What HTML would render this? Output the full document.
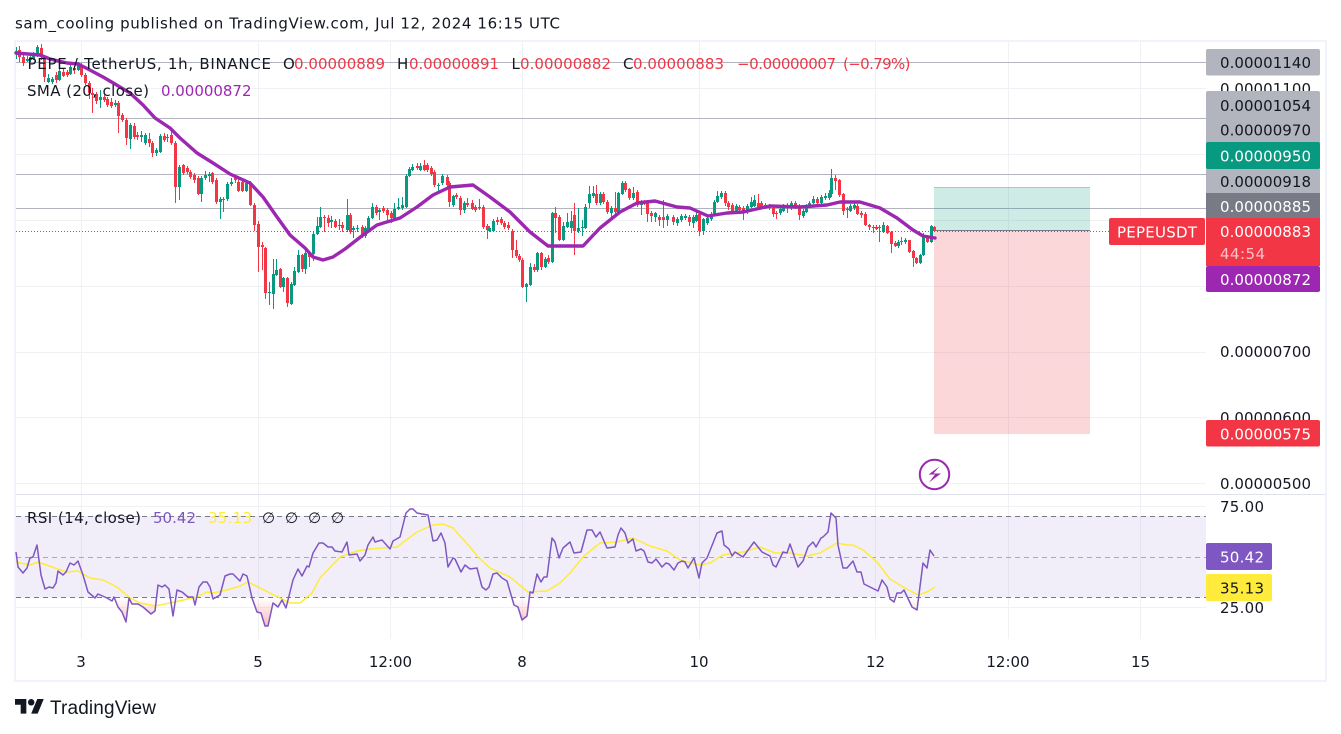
<!DOCTYPE html>
<html><head><meta charset="utf-8"><title>PEPEUSDT</title>
<style>
html,body{margin:0;padding:0;background:#fff;width:1341px;height:734px;overflow:hidden}
svg{display:block}
text{font-family:"DejaVu Sans","Liberation Sans",sans-serif;font-size:15px;fill:#131722}
.r{fill:#f23645}.w{fill:#fff}
</style></head><body>
<svg width="1341" height="734" viewBox="0 0 1341 734" xmlns="http://www.w3.org/2000/svg">
<defs><linearGradient id="g" gradientUnits="userSpaceOnUse" x1="0" y1="598" x2="0" y2="626"><stop offset="0" stop-color="#f23645" stop-opacity="0"/><stop offset="1" stop-color="#f23645" stop-opacity=".35"/></linearGradient></defs>
<rect width="1341" height="734" fill="#fff"/>
<text x="15" y="28.5" textLength="545">sam_cooling published on TradingView.com, Jul 12, 2024 16:15 UTC</text>
<rect x="15" y="41" width="1311" height="640" fill="#fff" stroke="#f0f3fa" stroke-width="2"/>

<!-- grid -->
<path d="M16 88.5H1206M16 154.5H1206M16 220.5H1206M16 286.5H1206M16 352.5H1206M16 417.5H1206M16 483.5H1206M16 506.5H1206M16 607.5H1206M81.5 42V494M258.5 42V494M390.5 42V494M522.5 42V494M699.5 42V494M875.5 42V494M1008.5 42V494M1140.5 42V494M81.5 495V639M258.5 495V639M390.5 495V639M522.5 495V639M699.5 495V639M875.5 495V639M1008.5 495V639M1140.5 495V639" stroke="#f0f1f5" stroke-width="1" fill="none"/>
<path d="M16 494.5H1325" stroke="#e0e3eb" stroke-width="1"/>

<!-- horizontal lines -->
<path d="M16 62.5H1206M16 118.5H1206M16 174.5H1206M16 208.5H1206" stroke="#b2b5be" stroke-width="1"/>

<!-- position boxes -->
<rect x="934" y="187" width="156" height="44" fill="#089981" fill-opacity=".2"/>
<rect x="934" y="231" width="156" height="203" fill="#f23645" fill-opacity=".2"/>
<path d="M934 187.5H1090" stroke="#089981" stroke-opacity=".3"/>
<path d="M934 230.5H1090" stroke="#787b86"/>

<!-- last price line -->
<path d="M16 231.5H1109" stroke="#f23645" stroke-width="1" stroke-dasharray="1 2"/>

<!-- candles: wicks -->
<g fill="none" shape-rendering="crispEdges">
<path stroke="#f23645" stroke-width="1" d="M19.5 46V62M23.5 55V66M41.5 44V60M44.5 55V82M56.5 72V83M63.5 69V77M67.5 70V77M74.5 66V74M81.5 63V77M85.5 73V85M89.5 81V99M92.5 88V113M96.5 92V104M104.5 95V102M107.5 97V107M111.5 98V108M118.5 101V133M122.5 113V122M126.5 118V145M134.5 123V139M137.5 132V140M149.5 133V147M152.5 141V157M164.5 133V142M171.5 129V145M175.5 141V203M183.5 164V175M187.5 166V174M190.5 170V179M194.5 173V183M198.5 176V195M212.5 172V184M216.5 178V204M223.5 197V212M235.5 175V183M238.5 178V192M242.5 180V192M250.5 181V206M254.5 203V231M258.5 221V272M262.5 242V270M265.5 247V299M280.5 268V288M287.5 277V307M302.5 254V272M309.5 251V267M324.5 215V232M328.5 215V227M335.5 219V228M342.5 222V232M350.5 213V234M362.5 225V238M376.5 205V215M383.5 206V213M387.5 208V223M391.5 211V223M417.5 163V170M424.5 160V171M427.5 163V172M431.5 166V176M434.5 170V187M447.5 175V187M449.5 181V207M456.5 193V199M460.5 196V215M467.5 198V207M472.5 200V210M475.5 205V212M483.5 205V229M487.5 224V239M497.5 217V225M501.5 217V225M504.5 221V229M508.5 222V230M512.5 229V258M516.5 240V258M519.5 254V262M522.5 258V288M534.5 264V272M541.5 252V270M548.5 255V264M555.5 207V233M559.5 215V241M574.5 203V255M596.5 185V205M603.5 192V204M607.5 200V214M615.5 192V216M625.5 181V192M629.5 188V200M637.5 190V207M644.5 200V205M647.5 200V222M651.5 211V222M659.5 215V226M663.5 200V228M673.5 215V225M689.5 215V226M699.5 212V236M725.5 191V206M728.5 201V210M732.5 203V214M739.5 205V212M743.5 206V220M758.5 194V209M761.5 201V209M765.5 203V209M769.5 204V210M773.5 206V217M776.5 211V219M787.5 203V213M795.5 201V209M799.5 204V220M817.5 197V205M835.5 175V190M839.5 179V197M843.5 193V215M857.5 204V215M861.5 211V218M865.5 212V226M869.5 224V230M873.5 225V233M876.5 225V230M879.5 225V242M887.5 225V234M891.5 231V253M895.5 241V247M901.5 237V245M909.5 240V253M913.5 250V267M916.5 257V264M927.5 235V243M934.5 226V232"/>
<path stroke="#089981" stroke-width="1" d="M16.5 47V59M27.5 56V62M30.5 54V62M33.5 52V60M37.5 45V57M48.5 74V83M52.5 77V84M59.5 69V81M70.5 65V75M78.5 62V71M100.5 90V108M115.5 100V107M130.5 123V149M141.5 131V142M145.5 133V145M156.5 148V156M160.5 134V153M167.5 134V142M179.5 165V200M201.5 176V202M205.5 171V180M209.5 172V182M220.5 197V219M227.5 182V201M231.5 178V186M246.5 181V192M269.5 282V305M273.5 259V309M276.5 259V276M283.5 277V292M291.5 282V305M294.5 267V286M298.5 250V273M305.5 250V274M313.5 232V261M317.5 217V235M320.5 207V228M331.5 216V228M339.5 219V230M347.5 199V232M353.5 226V238M357.5 225V232M365.5 226V238M368.5 216V231M372.5 203V219M379.5 208V220M394.5 203V221M398.5 198V210M402.5 197V210M406.5 174V208M409.5 167V177M412.5 164V171M420.5 163V171M438.5 183V192M442.5 174V185M453.5 195V207M464.5 201V213M479.5 199V210M489.5 226V232M493.5 219V232M526.5 283V302M530.5 263V286M537.5 252V272M545.5 257V268M552.5 212V263M563.5 222V241M567.5 213V228M571.5 211V233M578.5 208V233M582.5 220V236M585.5 204V229M589.5 186V208M593.5 186V198M600.5 192V205M611.5 206V220M618.5 192V214M622.5 181V195M633.5 187V200M641.5 200V215M655.5 212V222M667.5 214V226M677.5 217V226M681.5 214V222M685.5 214V220M693.5 215V228M696.5 212V222M703.5 218V235M707.5 216V225M711.5 212V221M714.5 200V216M717.5 191V203M721.5 191V199M736.5 204V214M747.5 204V214M751.5 197V208M754.5 195V207M780.5 207V215M783.5 204V212M791.5 201V210M803.5 209V218M806.5 204V213M809.5 201V208M813.5 196V204M821.5 195V205M825.5 193V200M829.5 190V200M831.5 169V197M847.5 207V218M850.5 204V212M854.5 203V210M883.5 222V233M898.5 240V248M905.5 238V244M920.5 254V264M923.5 233V256M931.5 225V243"/>
<!-- candles: bodies -->
<path stroke="#f23645" stroke-width="3" d="M19.5 50V57M23.5 57V63M41.5 48V57M44.5 57V77M56.5 75V80M63.5 72V76M67.5 72V75M74.5 68V70M81.5 65V75M85.5 75V83M89.5 83V93M92.5 93V95M96.5 94V101M104.5 97V100M107.5 99V105M111.5 102V106M118.5 103V116M122.5 115V120M126.5 120V138M134.5 126V137M137.5 135V137M149.5 139V143M152.5 143V153M164.5 136V140M171.5 135V143M175.5 143V187M183.5 165V173M187.5 168V172M190.5 172V177M194.5 175V180M198.5 178V194M212.5 173V182M216.5 180V202M223.5 199V200M235.5 177V180M238.5 182V191M242.5 182V191M250.5 183V205M254.5 205V225M258.5 224V247M262.5 245V247M265.5 248V293M280.5 269V287M287.5 278V303M302.5 255V269M309.5 253V257M324.5 217V218M328.5 218V223M335.5 221V227M342.5 225V228M350.5 215V232M362.5 227V236M376.5 207V213M383.5 208V211M387.5 210V215M391.5 213V218M417.5 166V168M424.5 165V170M427.5 165V170M431.5 168V174M434.5 172V185M447.5 177V185M449.5 183V202M456.5 195V197M460.5 198V210M467.5 203V205M472.5 203V209M475.5 207V210M483.5 207V227M487.5 226V230M497.5 220V222M501.5 219V223M504.5 223V227M508.5 225V228M512.5 231V250M516.5 250V256M519.5 256V260M522.5 260V287M534.5 267V270M541.5 253V267M548.5 258V262M555.5 213V218M559.5 217V240M574.5 215V231M596.5 194V203M603.5 194V202M607.5 202V212M615.5 208V212M625.5 183V190M629.5 189V198M637.5 192V205M644.5 202V203M647.5 202V214M651.5 213V216M659.5 217V220M663.5 217V220M673.5 217V222M689.5 217V222M699.5 214V231M725.5 193V203M728.5 203V207M732.5 205V212M739.5 207V210M743.5 208V213M758.5 203V207M761.5 203V207M765.5 205V207M769.5 206V208M773.5 208V214M776.5 213V214M787.5 205V208M795.5 203V207M799.5 206V215M817.5 199V203M835.5 178V181M839.5 180V195M843.5 194V211M857.5 206V214M861.5 213V215M865.5 214V225M869.5 225V227M873.5 227V228M876.5 227V229M879.5 227V228M887.5 226V233M891.5 232V244M895.5 243V246M901.5 241V242M909.5 240V252M913.5 251V258M916.5 258V263M927.5 236V242M934.5 227V231"/>
<path stroke="#089981" stroke-width="3" d="M16.5 51V54M27.5 59V61M30.5 57V60M33.5 56V59M37.5 47V55M48.5 78V82M52.5 79V82M59.5 71V80M70.5 67V74M78.5 65V70M100.5 97V100M115.5 103V105M130.5 125V139M141.5 135V137M145.5 135V143M156.5 150V153M160.5 136V152M167.5 137V138M179.5 167V187M201.5 178V194M205.5 175V178M209.5 174V176M220.5 199V202M227.5 184V199M231.5 182V184M246.5 183V191M269.5 292V293M273.5 274V294M276.5 270V275M283.5 278V287M291.5 284V304M294.5 271V285M298.5 255V272M305.5 253V269M313.5 234V254M317.5 226V234M320.5 217V227M331.5 220V222M339.5 225V226M347.5 215V230M353.5 228V230M357.5 228V229M365.5 228V236M368.5 218V230M372.5 207V218M379.5 210V212M394.5 209V220M398.5 207V209M402.5 205V208M406.5 176V207M409.5 169V176M412.5 167V170M420.5 166V170M438.5 185V186M442.5 176V183M453.5 196V205M464.5 203V210M479.5 207V208M489.5 228V231M493.5 221V231M526.5 284V287M530.5 267V285M537.5 253V270M545.5 259V267M552.5 213V262M563.5 226V240M567.5 222V227M571.5 221V228M578.5 228V231M582.5 227V228M585.5 207V228M589.5 194V203M593.5 193V196M600.5 194V203M611.5 208V213M618.5 193V212M622.5 183V194M633.5 193V198M641.5 202V205M655.5 213V217M667.5 216V220M677.5 219V223M681.5 216V220M685.5 216V218M693.5 217V223M696.5 215V221M703.5 219V231M707.5 218V223M711.5 214V219M714.5 202V215M717.5 196V202M721.5 193V197M736.5 206V212M747.5 206V212M751.5 202V207M754.5 200V206M780.5 209V213M783.5 206V211M791.5 203V208M803.5 211V216M806.5 206V212M809.5 203V207M813.5 199V203M821.5 197V203M825.5 196V198M829.5 193V198M831.5 178V194M847.5 209V210M850.5 206V211M854.5 205V208M883.5 225V232M898.5 242V246M905.5 240V242M920.5 255V263M923.5 235V255M931.5 226V242"/>
</g>

<!-- SMA -->
<polyline fill="none" stroke="#9c27b0" stroke-width="3.4" stroke-linejoin="round" stroke-linecap="round" points="16,53 40,55 50,59 67,63 78,64 88,69 103,77 115,84 130,93 143,105 155,118 170,128 180,138 197,153 213,163 230,174 250,183 263,197 277,217 290,235 305,248 313,257 323,260 333,257 345,249 363,235 377,225 400,218 417,207 433,195 450,187 473,185 490,197 510,212 530,232 548,246 583,246 600,228 620,212 637,203 655,201 677,207 690,208 708,216 727,213 743,212 770,206 800,207 827,205 840,202 860,202 880,208 897,218 913,230 923,236 935,238"/>

<!-- RSI band -->
<rect x="16" y="516" width="1190" height="81.5" fill="#7e57c2" fill-opacity=".1"/>
<path d="M16 516.5H1206M16 597.5H1206" stroke="#787b86" stroke-dasharray="5 4"/>
<path d="M16 557.5H1206" stroke="#787b86" stroke-opacity=".6" stroke-dasharray="5 4"/>
<g fill="url(#g)">
<polygon points="115,598 118,607 122,612 126,622 129,598"/>
<polygon points="130,598 132,604 138,604 143,607 151,614 155,611 157,598"/>
<polygon points="252,598 257,612 261,613 265,626 268,626 273,603 278,607 282,600 286,608 289,598"/>
<polygon points="512,598 514,605 518,607 522,620 527,616 529,598"/>
<polygon points="889,598 890,599 894,602 896,598"/>
<polygon points="908,598 912,607 917,610 919,598"/>
</g>
<polyline fill="none" stroke="#ffeb3b" stroke-width="1.5" stroke-linejoin="round" points="16,562 30,565 38,562 55,568 67,572 78,571 90,578 103,580 117,587 130,598 140,603 155,606 170,603 197,597 207,592 213,593 227,590 240,586 248,582 270,593 290,603 300,603 312,593 320,578 340,557 357,551 370,549 397,547 417,532 433,525 443,524 453,528 470,547 478,557 490,568 510,577 528,592 547,591 560,583 570,573 583,557 600,543 617,542 633,538 650,546 667,551 680,560 700,565 710,563 723,555 743,552 760,547 775,553 790,553 807,556 820,553 837,543 847,545 853,545 863,550 877,562 890,579 903,587 918,595 927,592 935,587"/>
<polyline fill="none" stroke="#7e57c2" stroke-width="1.5" stroke-linejoin="round" points="16,552 18,567 23,573 27,568 30,558 33,557 37,545 41,575 45,589 49,587 53,588 56,583 58,571 63,575 66,572 70,563 74,565 78,561 83,575 88,592 95,598 98,594 107,598 112,601 114,597 118,607 122,612 126,622 129,598 132,604 138,604 143,607 151,614 155,611 158,585 162,587 165,585 169,589 173,616 177,590 182,592 188,597 193,597 195,605 199,587 203,582 207,582 210,587 213,599 220,595 225,576 230,574 233,574 240,581 243,574 247,576 252,598 257,612 261,613 265,626 268,626 273,603 278,607 282,600 286,608 293,580 298,569 302,576 307,566 309,567 313,553 319,543 323,543 328,547 332,547 335,551 342,552 347,542 349,555 357,554 360,561 365,555 368,545 373,537 375,542 382,540 390,549 393,541 400,537 406,513 410,509 413,509 417,513 422,514 428,515 433,541 437,540 441,533 445,543 448,567 453,558 455,559 461,572 465,565 470,569 477,568 482,587 486,590 489,587 493,574 497,573 502,578 507,581 514,605 518,607 522,620 527,616 530,592 533,593 537,574 541,582 544,577 547,577 552,538 555,542 559,558 563,548 570,542 574,553 581,552 587,530 592,530 596,537 600,532 607,548 615,547 618,535 621,528 625,533 628,543 633,539 636,551 641,549 644,551 648,562 652,563 656,559 662,567 666,563 669,564 674,570 678,563 682,561 685,562 688,568 694,558 699,578 702,563 707,558 717,533 722,531 724,545 729,549 732,556 735,552 743,557 754,542 762,552 770,556 773,565 776,567 783,552 787,553 790,544 798,567 803,561 808,547 813,542 816,547 821,538 823,537 828,532 831,513 836,518 838,545 843,568 847,568 853,561 857,572 861,572 864,584 878,591 882,580 887,587 890,599 894,602 897,593 901,593 904,590 912,607 917,610 923,563 927,568 930,550 934,556"/>

<!-- lightning icon -->
<circle cx="934.5" cy="474.5" r="14.7" fill="#fff" stroke="#9c27b0" stroke-width="2"/>
<path d="M939.5 466.5L928.5 474.5H935L929 482.5L941 473.5H933.5Z" fill="#9c27b0"/>

<!-- legend -->
<text x="27.5" y="69" textLength="243.5">PEPE / TetherUS, 1h, BINANCE</text>
<text x="283" y="69" textLength="11">O</text><text class="r" x="294" y="69" textLength="91">0.00000889</text>
<text x="397" y="69" textLength="12">H</text><text class="r" x="409" y="69" textLength="90">0.00000891</text>
<text x="511.5" y="69" textLength="9">L</text><text class="r" x="520" y="69" textLength="91">0.00000882</text>
<text x="623" y="69" textLength="10.5">C</text><text class="r" x="633" y="69" textLength="91">0.00000883</text>
<text class="r" x="737" y="69" textLength="99">−0.00000007</text>
<text class="r" x="843" y="69" textLength="67.5">(−0.79%)</text>
<text x="27" y="96" textLength="122">SMA (20, close)</text>
<text x="161" y="96" textLength="90.5" style="fill:#9c27b0">0.00000872</text>
<text x="27" y="523" textLength="114">RSI (14, close)</text>
<text x="153" y="523" textLength="43" style="fill:#7e57c2">50.42</text>
<text x="208" y="523" textLength="44" style="fill:#ffeb3b">35.13</text>
<text x="262" y="523">∅</text>
<text x="285" y="523">∅</text>
<text x="308" y="523">∅</text>
<text x="331" y="523">∅</text>

<!-- plain price labels -->
<text x="1220" y="94" textLength="91">0.00001100</text>
<text x="1220" y="357" textLength="91">0.00000700</text>
<text x="1220" y="423" textLength="91">0.00000600</text>
<text x="1220" y="489" textLength="91">0.00000500</text>
<text x="1220" y="512" textLength="44">75.00</text>
<text x="1220" y="613" textLength="44">25.00</text>

<!-- tagged labels -->
<rect x="1206" y="49" width="114" height="26.5" rx="2" fill="#b2b5be"/>
<rect x="1206" y="91" width="114" height="26" rx="2" fill="#b2b5be"/>
<rect x="1206" y="115" width="114" height="28" fill="#b2b5be"/>
<rect x="1206" y="166" width="114" height="28" fill="#b2b5be"/>
<rect x="1206" y="142" width="114" height="27" rx="2" fill="#089981"/>
<rect x="1206" y="193" width="114" height="25" fill="#787b86"/>
<rect x="1206" y="218" width="114" height="48" fill="#f23645"/>
<rect x="1206" y="266" width="114" height="26" rx="2" fill="#9c27b0"/>
<rect x="1206" y="420" width="114" height="26.5" rx="2" fill="#f23645"/>
<rect x="1109" y="218" width="96" height="27" rx="2" fill="#f23645"/>
<rect x="1206" y="543" width="66" height="27" rx="2" fill="#7e57c2"/>
<rect x="1206" y="574" width="66" height="27" rx="2" fill="#ffeb3b"/>

<text x="1220" y="68" textLength="91">0.00001140</text>
<text x="1220" y="111" textLength="91">0.00001054</text>
<text x="1220" y="135.5" textLength="91">0.00000970</text>
<text class="w" x="1220" y="161.5" textLength="91">0.00000950</text>
<text x="1220" y="187" textLength="91">0.00000918</text>
<text class="w" x="1220" y="212" textLength="91">0.00000885</text>
<text class="w" x="1220" y="237" textLength="91">0.00000883</text>
<text x="1220" y="259" textLength="45" style="fill:#fbc2c7">44:54</text>
<text class="w" x="1220" y="285" textLength="91">0.00000872</text>
<text class="w" x="1220" y="439.5" textLength="91">0.00000575</text>
<text class="w" x="1117" y="237.5" textLength="80">PEPEUSDT</text>
<text class="w" x="1220" y="562.5" textLength="44">50.42</text>
<text x="1220" y="593.5" textLength="44">35.13</text>

<!-- time axis -->
<g text-anchor="middle">
<text x="81" y="667">3</text>
<text x="258" y="667">5</text>
<text x="390.5" y="667">12:00</text>
<text x="522" y="667">8</text>
<text x="699" y="667">10</text>
<text x="875.5" y="667">12</text>
<text x="1008" y="667">12:00</text>
<text x="1140.5" y="667">15</text>
</g>

<!-- logo -->
<g transform="translate(15 695.8) scale(.81)" fill="#131722"><path d="M14 22H7V11H0V4h14v18zM28 22h-8l7.5-18h8L28 22z"/><circle cx="20" cy="8" r="4"/></g>
<text x="50" y="714" textLength="106" style="font-family:'Liberation Sans',sans-serif;font-size:19px">TradingView</text>
</svg>
</body></html>
